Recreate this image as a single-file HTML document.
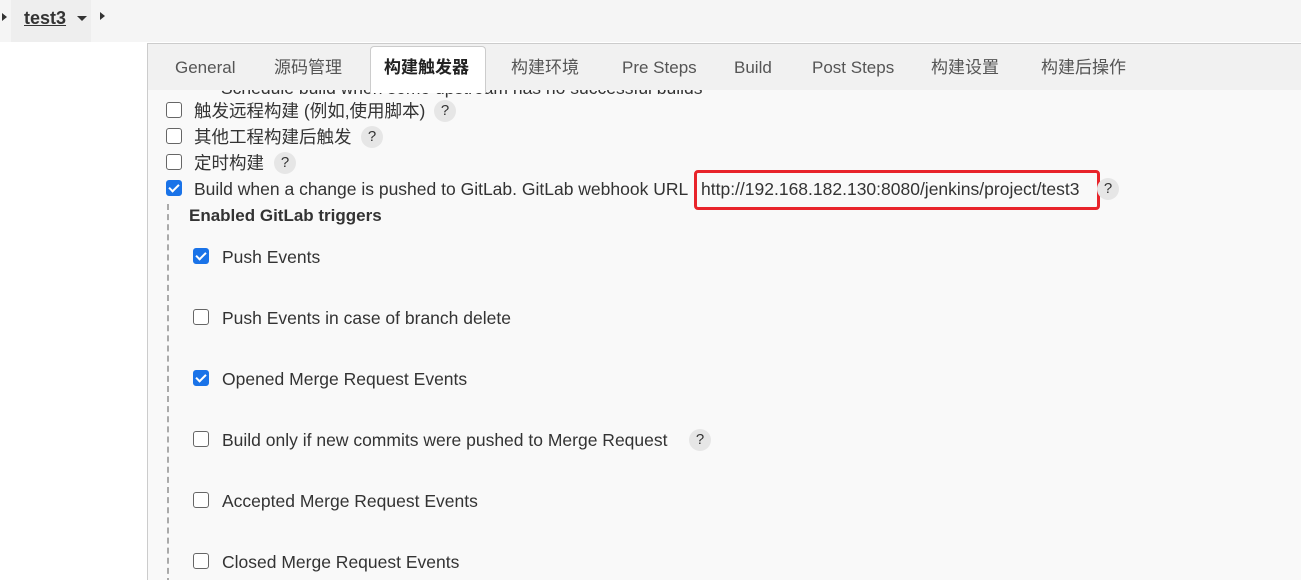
<!DOCTYPE html>
<html><head><meta charset="utf-8"><style>
body{margin:0;width:1301px;height:579px;overflow:hidden;background:#fff;font-family:"Liberation Sans","Noto Sans CJK SC",sans-serif;color:#333;position:relative}
.top{position:absolute;left:0;top:0;width:1301px;height:42px;background:#f5f5f5}
.crumb{position:absolute;left:11px;top:0;width:80px;height:42px;background:#eeeeee}
.main{position:absolute;left:147px;top:43px;width:1154px;height:536px;background:#f9f9f9;border-left:1px solid #ccc;border-top:1px solid #ccc;overflow:hidden}
.tabs{position:absolute;left:0;top:0;width:1154px;height:46px;background:#f1f1f1;z-index:2}
.tab{position:absolute;top:14px;font-size:17px;line-height:20px;color:#555}
.act{position:absolute;left:222px;top:2px;width:114px;height:46px;background:#fff;border:1px solid #ccc;border-bottom:none;border-radius:4px 4px 0 0}
.t{position:absolute;font-size:17.5px;line-height:20px;white-space:nowrap;color:#333}
.cb{position:absolute;width:14px;height:14px;border:1px solid #666;border-radius:3px;background:#fff}
.ck{background:#1a73e8;border-color:#1a73e8}
.ck::after{content:"";position:absolute;left:4px;top:1px;width:4px;height:8px;border:solid #fff;border-width:0 2px 2px 0;transform:rotate(45deg)}
.q{position:absolute;width:22px;height:22px;border-radius:11px;background:#e6e6e6;font-size:15px;text-align:center;line-height:22px;color:#333}
</style></head><body>
<div class="top"></div>
<div class="crumb"></div>
<div style="position:absolute;left:2px;top:13px;border-left:5px solid #333;border-top:4px solid transparent;border-bottom:4px solid transparent"></div>
<div style="position:absolute;left:24px;top:8px;font-size:18px;font-weight:bold;color:#333;text-decoration:underline">test3</div>
<div style="position:absolute;left:77px;top:16px;border-top:5px solid #333;border-left:5px solid transparent;border-right:5px solid transparent"></div>
<div style="position:absolute;left:100px;top:12px;border-left:5px solid #333;border-top:4px solid transparent;border-bottom:4px solid transparent"></div>
<div class="main">
<div class="t" style="left:73px;top:34px">Schedule build when some upstream has no successful builds</div>
<div class="tabs">
<div class="act"></div>
<div class="tab" style="left:27px">General</div>
<div class="tab" style="left:126px">源码管理</div>
<div class="tab" style="left:236px;color:#222;font-weight:bold">构建触发器</div>
<div class="tab" style="left:363px">构建环境</div>
<div class="tab" style="left:474px">Pre Steps</div>
<div class="tab" style="left:586px">Build</div>
<div class="tab" style="left:664px">Post Steps</div>
<div class="tab" style="left:783px">构建设置</div>
<div class="tab" style="left:893px">构建后操作</div>
</div>
<div style="position:absolute;left:19px;top:160px;height:380px;border-left:2px dashed #aaa"></div>
</div>
<div class="cb" style="left:166px;top:102px"></div><div class="t" style="left:194px;top:101px">触发远程构建 (例如,使用脚本)</div><div class="q" style="left:434px;top:100px">?</div>
<div class="cb" style="left:166px;top:128px"></div><div class="t" style="left:194px;top:127px">其他工程构建后触发</div><div class="q" style="left:361px;top:126px">?</div>
<div class="cb" style="left:166px;top:154px"></div><div class="t" style="left:194px;top:153px">定时构建</div><div class="q" style="left:274px;top:152px">?</div>
<div class="cb ck" style="left:166px;top:180px"></div><div class="t" style="left:194px;top:179px">Build when a change is pushed to GitLab. GitLab webhook URL</div>
<div style="position:absolute;left:694px;top:170px;width:400px;height:34px;border:3px solid #e8242a;border-radius:4px"></div>
<div class="t" style="left:701px;top:179px">http://192.168.182.130:8080/jenkins/project/test3</div>
<div class="q" style="left:1097px;top:178px">?</div>
<div class="t" style="left:189px;top:206px;font-weight:bold;font-size:17px">Enabled GitLab triggers</div>
<div class="cb ck" style="left:193px;top:248px"></div><div class="t" style="left:222px;top:247px">Push Events</div>
<div class="cb" style="left:193px;top:309px"></div><div class="t" style="left:222px;top:308px">Push Events in case of branch delete</div>
<div class="cb ck" style="left:193px;top:370px"></div><div class="t" style="left:222px;top:369px">Opened Merge Request Events</div>
<div class="cb" style="left:193px;top:431px"></div><div class="t" style="left:222px;top:430px">Build only if new commits were pushed to Merge Request</div><div class="q" style="left:689px;top:429px">?</div>
<div class="cb" style="left:193px;top:492px"></div><div class="t" style="left:222px;top:491px">Accepted Merge Request Events</div>
<div class="cb" style="left:193px;top:553px"></div><div class="t" style="left:222px;top:552px">Closed Merge Request Events</div>
</body></html>
